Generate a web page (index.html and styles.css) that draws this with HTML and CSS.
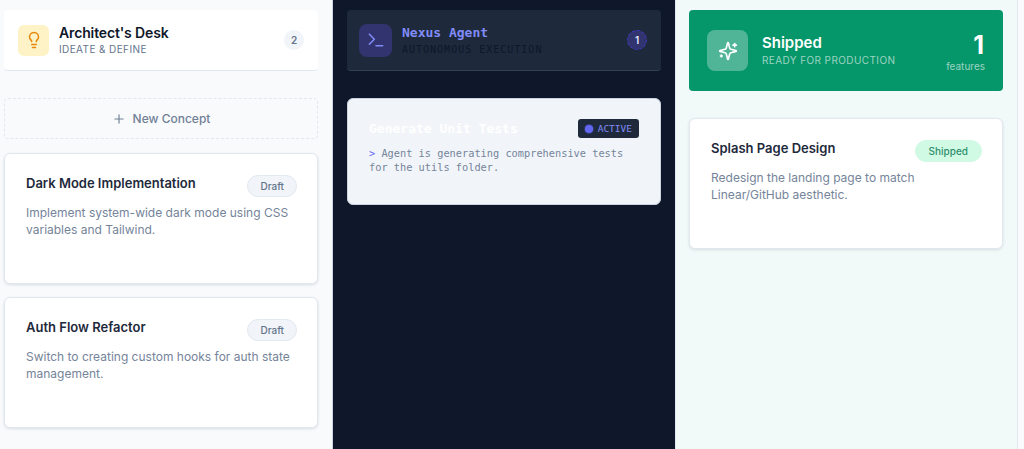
FILE: index.html
```html
<!DOCTYPE html>
<html lang="en">
<head>
    <meta charset="UTF-8">
    <meta name="viewport" content="width=device-width, initial-scale=1.0">
    <title>Feature Board</title>
    <link rel="stylesheet" href="styles.css">
</head>
<body>
    <div class="board">
        <!-- Ideas column -->
        <section class="column column-ideas">
            <header class="col-header">
                <div class="col-icon icon-amber">
                    <svg width="18" height="18" viewBox="0 0 24 24" fill="none" stroke="currentColor" stroke-width="2" stroke-linecap="round" stroke-linejoin="round"><path d="M15 14c.2-1 .7-1.700 1.500-2.500 1-.9 1.500-2.200 1.500-3.500A6 6 0 0 0 6 8c0 1 .2 2.200 1.500 3.500.7.7 1.300 1.500 1.500 2.500"/><path d="M9 18h6"/><path d="M10 22h4"/></svg>
                </div>
                <div class="col-titles">
                    <h2>Architect's Desk</h2>
                    <p>IDEATE &amp; DEFINE</p>
                </div>
                <span class="count">2</span>
            </header>

            <button class="new-concept">
                <svg width="14" height="14" viewBox="0 0 24 24" fill="none" stroke="currentColor" stroke-width="2" stroke-linecap="round"><path d="M5 12h14"/><path d="M12 5v14"/></svg>
                New Concept
            </button>

            <article class="card">
                <div class="card-top">
                    <h3>Dark Mode Implementation</h3>
                    <span class="tag">Draft</span>
                </div>
                <p>Implement system-wide dark mode using CSS variables and Tailwind.</p>
            </article>

            <article class="card">
                <div class="card-top">
                    <h3>Auth Flow Refactor</h3>
                    <span class="tag">Draft</span>
                </div>
                <p>Switch to creating custom hooks for auth state management.</p>
            </article>
        </section>

        <!-- Agent column -->
        <section class="column column-agent">
            <header class="col-header">
                <div class="col-icon icon-indigo">
                    <svg width="20" height="20" viewBox="0 0 24 24" fill="none" stroke="currentColor" stroke-width="1.8" stroke-linecap="round" stroke-linejoin="round"><path d="m4 17 6-6-6-6"/><path d="M12 19h8"/></svg>
                </div>
                <div class="col-titles">
                    <h2>Nexus Agent</h2>
                    <p>AUTONOMOUS EXECUTION</p>
                </div>
                <span class="count">1</span>
            </header>

            <article class="card card-active">
                <div class="card-top">
                    <h3>Generate Unit Tests</h3>
                    <span class="tag-active"><i class="pulse"></i>ACTIVE</span>
                </div>
                <p><span class="prompt">&gt;</span> Agent is generating comprehensive tests for the utils folder.</p>
            </article>
        </section>

        <!-- Shipped column -->
        <section class="column column-shipped">
            <header class="shipped-banner">
                <div class="col-icon icon-glass">
                    <svg width="20" height="20" viewBox="0 0 24 24" fill="none" stroke="currentColor" stroke-width="2" stroke-linecap="round" stroke-linejoin="round"><path d="M9.937 15.500A2 2 0 0 0 8.500 14.063l-6.135-1.582a.5.5 0 0 1 0-.962L8.500 9.936A2 2 0 0 0 9.937 8.500l1.582-6.135a.5.5 0 0 1 .963 0L14.063 8.500A2 2 0 0 0 15.500 9.937l6.135 1.581a.5.5 0 0 1 0 .964L15.500 14.063a2 2 0 0 0-1.437 1.437l-1.582 6.135a.5.5 0 0 1-.963 0z"/><path d="M20 3v4"/><path d="M22 5h-4"/><path d="M4 17v2"/><path d="M5 18H3"/></svg>
                </div>
                <div class="col-titles">
                    <h2>Shipped</h2>
                    <p>READY FOR PRODUCTION</p>
                </div>
                <div class="shipped-total">
                    <strong>1</strong>
                    <span>features</span>
                </div>
            </header>

            <article class="card">
                <div class="card-top">
                    <h3>Splash Page Design</h3>
                    <span class="tag tag-green">Shipped</span>
                </div>
                <p>Redesign the landing page to match Linear/GitHub aesthetic.</p>
            </article>
        </section>
    </div>
</body>
</html>
```

FILE: styles.css
```css
/* General Reset */
* {
    margin: 0;
    padding: 0;
    box-sizing: border-box;
}

html, body {
    height: 100%;
    overflow: hidden;
}

body {
    font-family: 'Inter', 'Liberation Sans', sans-serif;
    background-color: #f8fafc;
    color: #0f172a;
}

.board {
    display: grid;
    grid-template-columns: 333px 343px 342px;
    height: 449px;
}

.column {
    padding: 10px 14px;
    display: flex;
    flex-direction: column;
}

.column-ideas {
    padding-left: 4px;
    background: #f8fafc;
    border-right: 1px solid #cbd5e1;
}

.column-agent {
    background: #0f172a;
    border-right: 1px solid #e2e8f0;
}

.column-shipped {
    background: #f2faf9;
    padding-left: 13px;
    border-right: 1px solid #e2e8f0;
}

/* Column headers */
.col-header {
    display: flex;
    align-items: center;
    height: 61px;
    padding: 0 14px;
    background: #fff;
    border-bottom: 1px solid #e2e8f0;
    border-radius: 4px;
    margin-bottom: 27px;
}

.col-icon {
    width: 31px;
    height: 31px;
    border-radius: 6px;
    display: flex;
    align-items: center;
    justify-content: center;
    flex-shrink: 0;
}

.icon-amber {
    background: #fef3c7;
    color: #e8860a;
}

.icon-indigo {
    width: 33px;
    height: 33px;
    background: #31346f;
    color: #818cf8;
    border-radius: 8px;
}

.icon-glass {
    width: 41px;
    height: 41px;
    background: rgba(255, 255, 255, 0.3);
    color: #fff;
    border-radius: 8px;
}

.col-titles {
    flex: 1;
    margin-left: 10px;
}

.col-titles h2 {
    font-size: 14px;
    font-weight: 600;
    line-height: 17px;
    letter-spacing: -0.01em;
}

.col-titles p {
    font-size: 10px;
    line-height: 15px;
    margin-top: 1px;
    letter-spacing: 0.4px;
    color: #64748b;
}

.count {
    width: 20px;
    height: 20px;
    border-radius: 50%;
    background: #f1f5f9;
    color: #64748b;
    font-size: 10px;
    font-weight: 600;
    display: flex;
    align-items: center;
    justify-content: center;
}

.new-concept {
    height: 41px;
    margin-bottom: 14px;
    border: 1px dashed #e2e8f0;
    border-radius: 4px;
    background: transparent;
    color: #718096;
    font-family: inherit;
    font-size: 12px;
    font-weight: 500;
    display: flex;
    align-items: center;
    justify-content: center;
    gap: 7px;
}

/* Cards */
.card {
    height: 131px;
    padding: 20px 20px 20px 21px;
    margin-bottom: 13px;
    background: #fff;
    border: 1px solid #e2e8f0;
    border-radius: 6px;
    box-shadow: 0 1px 3px rgba(15, 23, 42, 0.12);
}

.card-top {
    display: flex;
    justify-content: space-between;
    align-items: flex-start;
    margin-bottom: 7px;
}

.card h3 {
    font-size: 13px;
    font-weight: 600;
    line-height: 18px;
    color: #1e293b;
}

.card p {
    font-size: 12px;
    line-height: 17px;
    color: #75849a;
}

.tag {
    height: 22px;
    padding: 0 12px;
    margin-top: 1px;
    border: 1px solid #e2e8f0;
    border-radius: 11px;
    background: #f1f5f9;
    color: #64748b;
    font-size: 10px;
    font-weight: 500;
    line-height: 20px;
}

.tag-green {
    padding: 0 13px;
    background: #d1fae5;
    border-color: #d1fae5;
    color: #2f8f6b;
}

/* Agent column */
.column-agent .col-header {
    background: #1e293b;
    border-bottom-color: #334155;
    padding: 0 14px 0 12px;
}

.column-agent .col-titles {
    margin-left: 10px;
}

.column-agent h2 {
    font-family: 'DejaVu Sans Mono', monospace;
    font-size: 13px;
    font-weight: 700;
    letter-spacing: 0;
    color: #818cf8;
}

.column-agent .col-titles p {
    font-family: 'DejaVu Sans Mono', monospace;
    font-size: 10px;
    letter-spacing: 1px;
    color: #0f172a;
}

.column-agent .count {
    background: #31346f;
    border: 1px dashed #4338ca;
    color: #e0e7ff;
}

.card-active {
    height: 107px;
    padding-right: 21px;
    background: #f1f5f9;
    border-color: #cbd5e1;
    font-family: 'DejaVu Sans Mono', monospace;
}

.card-active .card-top {
    margin-bottom: 8px;
    align-items: center;
}

.card-active h3 {
    font-size: 13px;
    font-weight: 700;
    color: #fff;
}

.card-active p {
    font-size: 10.3px;
    line-height: 14px;
    color: #75849a;
}

.prompt {
    color: #6366f1;
}

.tag-active {
    display: flex;
    align-items: center;
    gap: 5px;
    height: 19px;
    padding: 0 7px;
    border-radius: 3px;
    background: #1e293b;
    color: #818cf8;
    font-size: 9.5px;
}

.pulse {
    width: 8px;
    height: 8px;
    border-radius: 50%;
    background: #6366f1;
    box-shadow: 0 0 0 1px rgba(99, 102, 241, 0.3);
}

/* Shipped column */
.shipped-banner {
    display: flex;
    align-items: center;
    height: 81px;
    padding: 0 18px;
    margin-bottom: 27px;
    background: #059669;
    border-radius: 4px;
    color: #fff;
}

.shipped-banner .col-titles {
    margin-left: 14px;
}

.shipped-banner h2 {
    font-size: 15px;
    line-height: 18px;
    letter-spacing: 0;
}

.shipped-banner .col-titles p {
    color: rgba(255, 255, 255, 0.6);
}

.shipped-total {
    display: flex;
    flex-direction: column;
    align-items: flex-end;
    padding-top: 2px;
}

.shipped-total strong {
    font-size: 25px;
    line-height: 28px;
    font-weight: 700;
    margin-right: 1px;
}

.shipped-total span {
    font-size: 10px;
    line-height: 14px;
    color: rgba(255, 255, 255, 0.6);
}
```
